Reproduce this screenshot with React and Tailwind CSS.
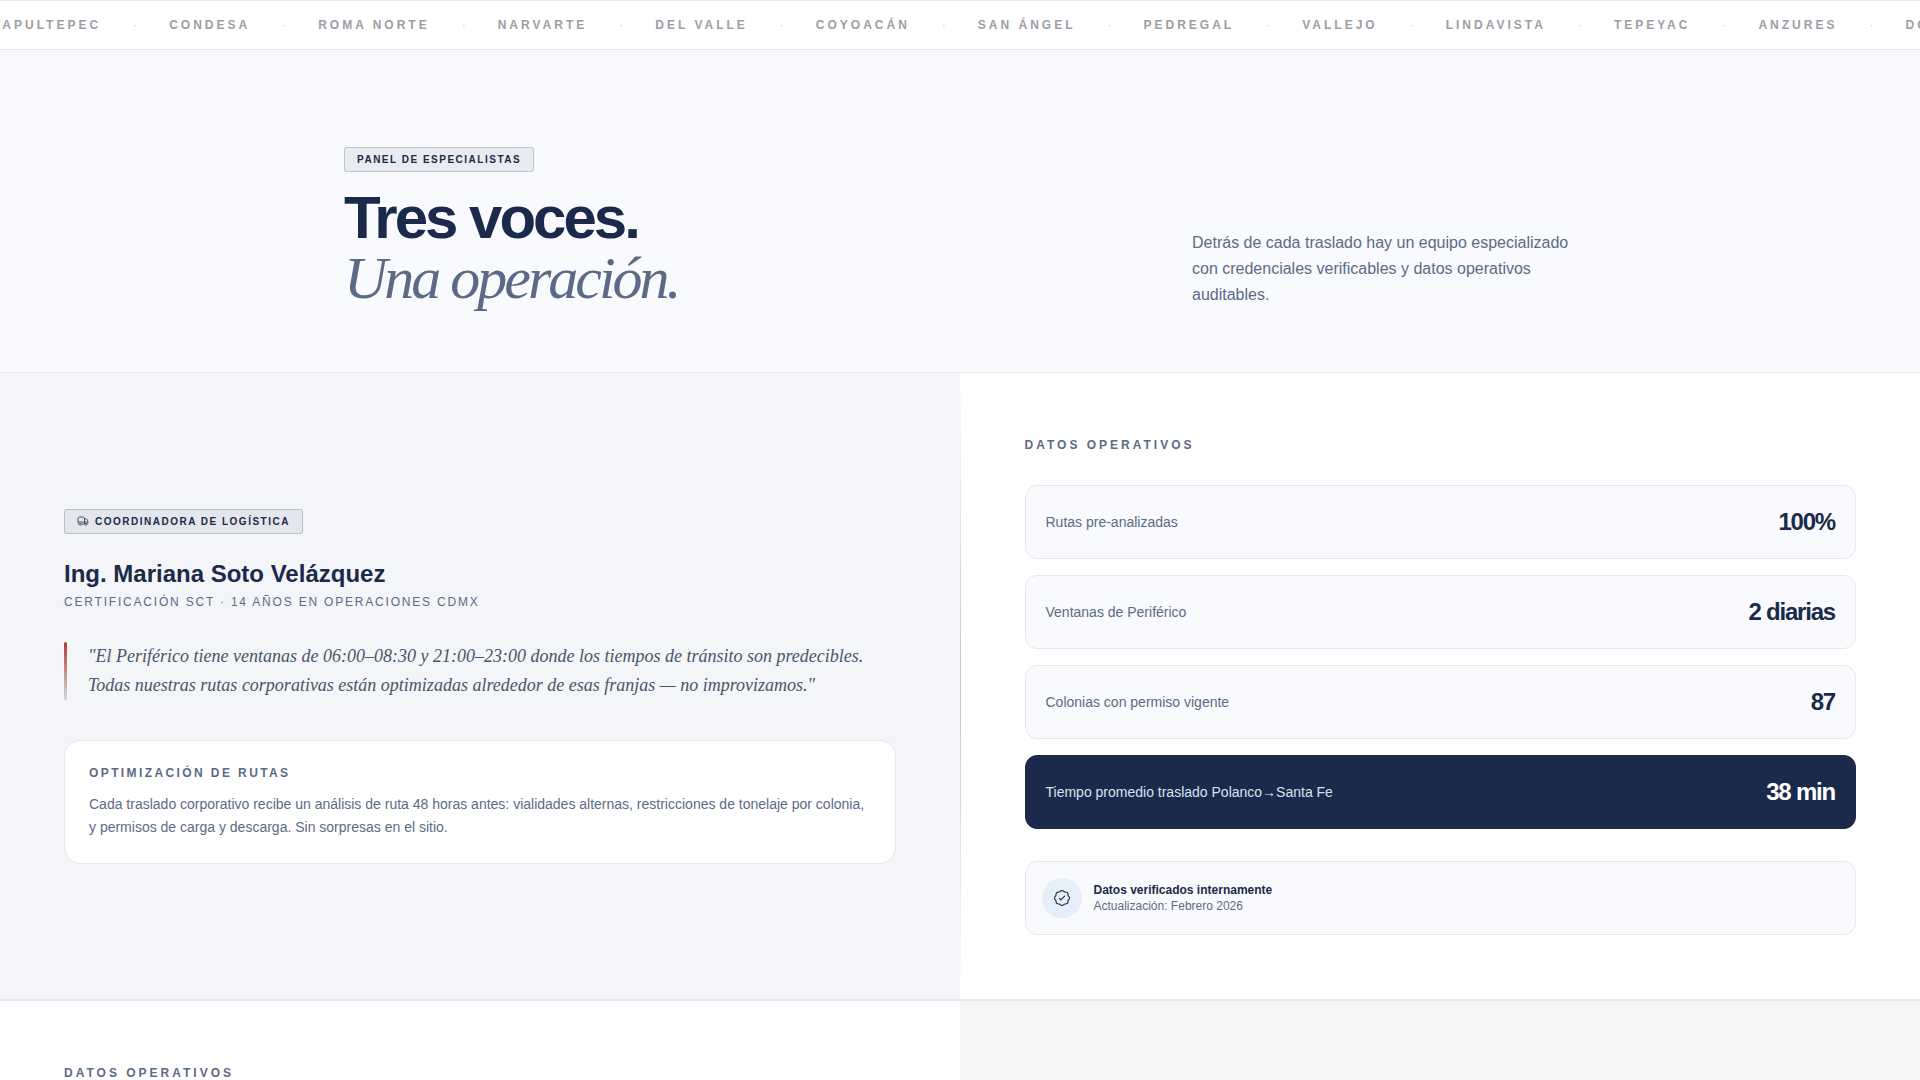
const colonias = [
  'Chapultepec',
  'Condesa',
  'Roma Norte',
  'Narvarte',
  'Del Valle',
  'Coyoacán',
  'San Ángel',
  'Pedregal',
  'Vallejo',
  'Lindavista',
  'Tepeyac',
  'Anzures',
  'Doctores',
];

const metrics = [
  { label: 'Rutas pre-analizadas', value: '100%' },
  { label: 'Ventanas de Periférico', value: '2 diarias' },
  { label: 'Colonias con permiso vigente', value: '87' },
  { label: 'Tiempo promedio traslado Polanco→Santa Fe', value: '38 min', featured: true },
];

function TruckIcon() {
  return (
    <svg className="size-3" viewBox="0 0 24 24" fill="none" stroke="currentColor" strokeWidth="1.5" aria-hidden="true">
      <path d="M4.500 18C2.800 18 2 17 2 15V8c0-3 1-4 4-4h5c3 0 4 1 4 4v10H9.500" />
      <path d="M15 7.500h2.500c1.200 0 2 .5 2.600 1.600l1.300 2.500c.4.800.6 1.500.6 2.400 0 2.800-.5 4-2.500 4M2 14h20" />
      <circle cx="7" cy="18.500" r="2" />
      <circle cx="17.500" cy="18.500" r="2" />
    </svg>
  );
}

function VerifiedIcon() {
  return (
    <svg className="size-[18px]" viewBox="0 0 24 24" fill="none" stroke="currentColor" strokeWidth="1.5" aria-hidden="true">
      <path d="M9.59 3.2c-.24.21-.36.31-.49.4-.3.2-.64.34-.99.41-.15.03-.31.04-.63.07-.8.06-1.200.09-1.540.21a2.740 2.740 0 0 0-1.650 1.650c-.12.34-.15.740-.21 1.540-.03.32-.04.480-.07.630-.07.350-.21.690-.41.990-.09.130-.190.250-.4.490-.52.610-.78.920-.93 1.240a2.710 2.710 0 0 0 0 2.340c.15.320.41.630.93 1.240.21.240.31.360.4.490.2.300.34.640.41.990.03.150.04.310.07.630.06.800.09 1.200.21 1.540.27.770.88 1.380 1.650 1.650.34.120.740.150 1.540.210.32.030.480.040.630.070.350.070.690.210.990.410.130.090.250.190.490.400.610.520.920.780 1.240.930a2.710 2.710 0 0 0 2.340 0c.320-.150.630-.410 1.240-.930.240-.210.360-.310.490-.400.300-.200.640-.340.990-.410.150-.030.310-.040.630-.070.800-.060 1.200-.090 1.540-.210a2.740 2.740 0 0 0 1.650-1.650c.120-.340.150-.740.210-1.540.030-.320.040-.480.070-.630.070-.350.210-.690.410-.990.090-.130.190-.250.400-.490.520-.610.780-.920.930-1.240a2.710 2.710 0 0 0 0-2.340c-.150-.320-.410-.630-.930-1.240-.210-.240-.310-.360-.400-.490a2.740 2.740 0 0 1-.410-.990c-.030-.150-.040-.310-.070-.630-.060-.800-.090-1.200-.210-1.540a2.740 2.740 0 0 0-1.650-1.650c-.340-.120-.740-.150-1.540-.210-.320-.030-.480-.040-.630-.070a2.740 2.740 0 0 1-.990-.410c-.130-.090-.250-.190-.490-.400-.610-.520-.920-.780-1.240-.930a2.710 2.710 0 0 0-2.340 0c-.320.150-.630.410-1.240.930Z" />
      <path d="m8.500 12.500 2 2 5-5" strokeLinecap="round" strokeLinejoin="round" />
    </svg>
  );
}

function Tag({ children }) {
  return (
    <span className="flex w-fit items-center gap-1.5 rounded-[3px] border border-[#1b2a4a]/20 bg-[#1b2a4a]/7 px-3 py-1 text-[10px] leading-[15px] font-bold tracking-[0.15em] text-[#1b2a4a] uppercase">
      {children}
    </span>
  );
}

function Ticker() {
  return (
    <div className="overflow-hidden border-y border-[#e5e7eb] bg-white py-4">
      <ul className="-ml-[21px] flex w-max items-center gap-8 text-xs font-bold tracking-[0.25em] whitespace-nowrap text-[#9b9ea5] uppercase">
        {colonias.map((name) => (
          <li key={name} className="flex items-center gap-8">
            {name}
            <span className="font-normal tracking-normal text-[#c9ccd1]">·</span>
          </li>
        ))}
      </ul>
    </div>
  );
}

function Intro() {
  return (
    <header className="border-b border-[#e5e7eb] bg-[#f8fafd] pt-[97px] pb-16">
      <div className="mx-auto flex max-w-7xl items-end justify-between px-6">
        <div className="space-y-4">
          <Tag>Panel de especialistas</Tag>
          <h1 className="text-6xl leading-none font-bold tracking-[-0.05em] text-[#1b2a4a]">
            Tres voces.
            <br />
            <em className="font-['Liberation_Serif',serif] font-normal text-[#5c6b85]">Una operación.</em>
          </h1>
        </div>
        <p className="max-w-sm text-base leading-[26px] text-[#5c6b85]">
          Detrás de cada traslado hay un equipo especializado con credenciales verificables y datos operativos
          auditables.
        </p>
      </div>
    </header>
  );
}

function MetricRow({ label, value, featured }) {
  return (
    <div
      className={
        featured
          ? 'flex items-center justify-between rounded-xl border border-[#1b2a4a] bg-[#1b2a4a] p-5'
          : 'flex items-center justify-between rounded-xl border border-[#e5e7eb] bg-[#f8fafd] p-5'
      }
    >
      <dt className={featured ? 'text-sm text-[#d6e4f0]' : 'text-sm text-[#5c6b85]'}>{label}</dt>
      <dd className={`text-2xl font-bold tracking-tighter ${featured ? 'text-white' : 'text-[#1b2a4a]'}`}>{value}</dd>
    </div>
  );
}

function SectionLabel({ children }) {
  return <h3 className="text-xs font-bold tracking-[0.25em] text-[#5c6b85] uppercase">{children}</h3>;
}

export default function App() {
  return (
    <main className="h-screen overflow-hidden bg-white font-['Liberation_Sans',Arial,sans-serif]">
      <Ticker />
      <Intro />

      <section className="grid grid-cols-[1fr_1px_1fr] border-b border-[#e5e7eb]">
        <div className="flex flex-col justify-center bg-[#f3f5f9] p-16">
          <Tag>
            <TruckIcon />
            Coordinadora de logística
          </Tag>
          <h2 className="mt-6 text-2xl font-bold text-[#1b2a4a]">Ing. Mariana Soto Velázquez</h2>
          <p className="mt-1 text-xs tracking-[0.15em] text-[#5c6b85] uppercase">
            Certificación SCT · 14 años en operaciones CDMX
          </p>

          <div className="mt-8 flex gap-[21px]">
            <div className="w-[3px] shrink-0 rounded-t-full bg-linear-to-b from-[#b03a2e] to-[#d3d7dd]" />
            <blockquote className="font-['Liberation_Serif',serif] text-lg leading-[29px] text-[#4a5568] italic">
              "El Periférico tiene ventanas de 06:00–08:30 y 21:00–23:00 donde los tiempos de tránsito son predecibles.
              Todas nuestras rutas corporativas están optimizadas alrededor de esas franjas — no improvizamos."
            </blockquote>
          </div>

          <div className="mt-10 rounded-2xl border border-[#e5e7eb] bg-white p-6">
            <h3 className="text-xs font-bold tracking-[0.2em] text-[#5c6b85] uppercase">Optimización de rutas</h3>
            <p className="mt-3 text-sm leading-[23px] text-[#5c6b85]">
              Cada traslado corporativo recibe un análisis de ruta 48 horas antes: vialidades alternas, restricciones de
              tonelaje por colonia, y permisos de carga y descarga. Sin sorpresas en el sitio.
            </p>
          </div>
        </div>

        <div className="bg-linear-to-b from-white via-[#b8c9dc] to-white" />

        <div className="bg-white p-16">
          <SectionLabel>Datos operativos</SectionLabel>
          <dl className="mt-8 space-y-4">
            {metrics.map((metric) => (
              <MetricRow key={metric.label} {...metric} />
            ))}
          </dl>
          <div className="mt-8 flex items-center gap-3 rounded-xl border border-[#e5e7eb] bg-[#f8fafd] p-4">
            <div className="flex size-10 items-center justify-center rounded-full bg-[#e6eef7] text-[#1b2a4a]">
              <VerifiedIcon />
            </div>
            <div className="text-xs">
              <p className="font-bold text-[#1b2a4a]">Datos verificados internamente</p>
              <p className="text-[#5c6b85]">Actualización: Febrero 2026</p>
            </div>
          </div>
        </div>
      </section>

      <section className="grid grid-cols-2 border-t border-[#e5e7eb]">
        <div className="bg-white p-16">
          <SectionLabel>Datos operativos</SectionLabel>
        </div>
        <div className="bg-[#f5f6f8] p-16" />
      </section>
    </main>
  );
}
